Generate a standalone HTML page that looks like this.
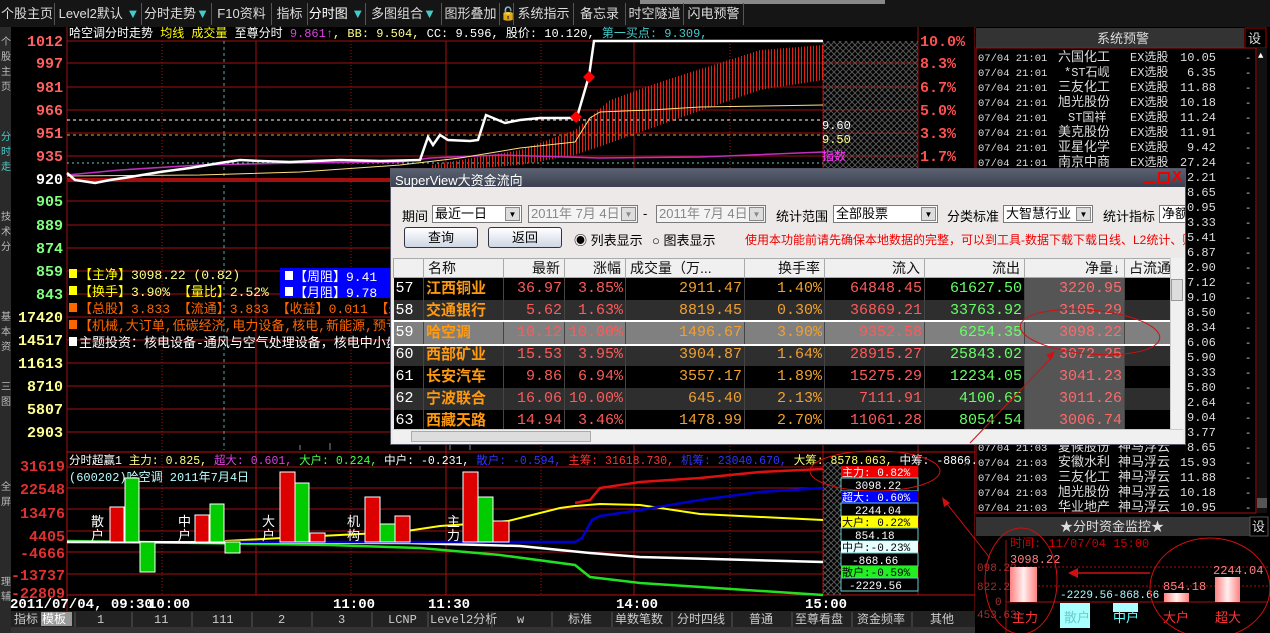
<!DOCTYPE html>
<html><head><meta charset="utf-8"><style>
*{margin:0;padding:0;box-sizing:border-box}
body{width:1270px;height:633px;background:#000;overflow:hidden;position:relative;font-family:"Liberation Sans","Noto Sans CJK SC",sans-serif}
.a{position:absolute;white-space:nowrap}
svg{position:absolute;left:0;top:0}
.tb{position:absolute;top:3px;height:22px;line-height:22px;font-size:13px;color:#ddd;border-right:1px solid #555;text-align:center}
.dlg{position:absolute;left:390px;top:168px;width:796px;height:277px;background:#ece9e8;border:1px solid #556;overflow:hidden}
.sel{position:absolute;height:18px;background:#fff;border:1px solid #7a7a7a;font-size:13px;line-height:16px;padding-left:2px;color:#000;overflow:hidden;white-space:nowrap}
.sel i{position:absolute;right:1px;top:1px;width:15px;height:14px;background:#ddd;border:1px solid #888;font-style:normal;font-size:8px;text-align:center;line-height:13px}
.dis{color:#888;background:#f4f4f4}
.btn{position:absolute;top:58px;height:21px;width:74px;border:1px solid #334;border-radius:3px;background:linear-gradient(#fff,#cfd6e4);font-size:13px;text-align:center;line-height:19px}
table{position:absolute;left:2px;top:89px;border-collapse:collapse;table-layout:fixed;width:777px;font-family:"Liberation Mono","Noto Sans CJK SC",monospace;font-size:15px}
tr{height:22px}
td{height:22px;line-height:20px;padding:0 2px;text-align:right;border-right:1px solid #444;overflow:hidden;white-space:nowrap}
th{height:19px;line-height:17px;background:#f0f0f0;color:#111;font-weight:normal;font-size:14px;border:1px solid #aaa;text-align:right;padding:0 4px;font-family:"Liberation Sans","Noto Sans CJK SC",sans-serif;overflow:hidden;white-space:nowrap}
.n{color:#ff9a10;font-weight:bold;text-align:left;font-family:"Liberation Sans","Noto Sans CJK SC",sans-serif;font-size:15px}
.i{color:#fff;text-align:left}
.r{color:#ff5a5a}.o{color:#f0a030}.g{color:#66ff66}.q{background:#555;color:#ff6a6a}
</style></head><body>
<svg width="1270" height="633" font-family="Liberation Mono, Noto Sans CJK SC, monospace">
<defs>
<pattern id="hx" width="6" height="6" patternUnits="userSpaceOnUse"><path d="M0 0L6 6M6 0L0 6" stroke="#555" stroke-width="1"/></pattern>
<pattern id="vs" width="3" height="4" patternUnits="userSpaceOnUse"><rect width="1" height="4" fill="#e02010"/></pattern>
<linearGradient id="pk" x1="0" x2="1"><stop offset="0" stop-color="#ff8080"/><stop offset=".5" stop-color="#fff0f0"/><stop offset="1" stop-color="#ff8080"/></linearGradient>
</defs>
<rect x="0" y="0" width="1270" height="27" fill="#151515"/>
<rect x="640" y="0" width="245" height="4" fill="#888"/>
<rect x="0" y="27" width="11" height="606" fill="#2a2a2a"/>
<g fill="#bbb" font-size="10"><text x="1" y="45">个</text><text x="1" y="60">股</text><text x="1" y="75">主</text><text x="1" y="90">页</text>
<text x="1" y="140" fill="#4cc">分</text><text x="1" y="155" fill="#4cc">时</text><text x="1" y="170" fill="#4cc">走</text>
<text x="1" y="220">技</text><text x="1" y="235">术</text><text x="1" y="250">分</text><text x="1" y="320">基</text><text x="1" y="335">本</text><text x="1" y="350">资</text><text x="1" y="390">三</text><text x="1" y="405">图</text><text x="1" y="490">全</text><text x="1" y="505">屏</text><text x="1" y="585">理</text><text x="1" y="600">辅</text></g>
<g stroke="#a01010" stroke-width="1">
<line x1="67" y1="41" x2="823" y2="41"/><line x1="67" y1="63" x2="918" y2="63"/><line x1="67" y1="87" x2="918" y2="87"/><line x1="67" y1="110" x2="918" y2="110"/><line x1="67" y1="133" x2="918" y2="133"/><line x1="67" y1="156" x2="918" y2="156"/>
<line x1="67" y1="201" x2="918" y2="201"/><line x1="67" y1="225" x2="918" y2="225"/><line x1="67" y1="248" x2="918" y2="248"/><line x1="67" y1="271" x2="918" y2="271"/><line x1="67" y1="294" x2="918" y2="294"/><line x1="67" y1="317" x2="918" y2="317"/><line x1="67" y1="340" x2="918" y2="340"/><line x1="67" y1="363" x2="918" y2="363"/><line x1="67" y1="386" x2="918" y2="386"/><line x1="67" y1="409" x2="918" y2="409"/><line x1="67" y1="432" x2="918" y2="432"/>
<line x1="67" y1="27" x2="67" y2="633"/><line x1="256" y1="41" x2="256" y2="595"/><line x1="446" y1="41" x2="446" y2="595"/><line x1="634" y1="41" x2="634" y2="595"/><line x1="823" y1="41" x2="823" y2="595"/><line x1="918" y1="27" x2="918" y2="595"/><line x1="975" y1="27" x2="975" y2="633"/>
</g>
<g stroke="#a01010" stroke-dasharray="1 2"><line x1="162" y1="41" x2="162" y2="595"/><line x1="351" y1="41" x2="351" y2="595"/><line x1="541" y1="41" x2="541" y2="595"/><line x1="730" y1="41" x2="730" y2="595"/></g>
<line x1="224" y1="41" x2="224" y2="450" stroke="#5aa" stroke-dasharray="3 3"/>
<rect x="823" y="41" width="95" height="140" fill="url(#hx)"/>
<line x1="67" y1="180" x2="823" y2="180" stroke="#a01010" stroke-width="4"/>
<line x1="67" y1="120" x2="823" y2="120" stroke="#fff" stroke-dasharray="3 3"/>
<line x1="67" y1="135" x2="823" y2="135" stroke="#f0a030" stroke-dasharray="3 3"/>
<line x1="67" y1="163" x2="823" y2="163" stroke="#6cc" stroke-dasharray="2 3"/>
<polygon points="430,165 520,150 575,130 610,100 660,82 760,50 823,45 823,80 760,90 660,125 610,143 575,155 520,165 430,172" fill="url(#vs)"/>
<polyline fill="none" stroke="#c030c0" stroke-width="1.5" points="67,175 120,170 200,165 300,163 400,162 430,158 500,155 600,158 700,157 823,152"/>
<polyline fill="none" stroke="#ffe080" stroke-width="1" points="67,176 200,175 300,172 400,165 460,158 520,148 575,142 590,118 600,112 650,110 700,107 823,105"/>
<polyline fill="none" stroke="#fff" stroke-width="2.5" points="67,173 75,180 95,183 110,180 130,177 160,172 190,168 220,163 240,160 260,161 290,162 340,160 380,161 420,160 428,137 433,145 440,135 448,140 470,141 478,140 486,115 505,123 520,120 540,118 575,118 577,117 582,100 589,76 594,41 823,41"/>
<path d="M576 111l6 6-6 6-6-6zM589 71l6 6-6 6-6-6z" fill="#f00"/>
<text x="822" y="129" fill="#fff" font-size="12">9.60</text><text x="822" y="143" fill="#ff8" font-size="12">9.50</text><text x="822" y="160" fill="#f3f" font-size="12">指数</text>
<g fill="#ff5050" font-size="15" font-weight="bold"><text x="920" y="46">10.0%</text><text x="920" y="68">8.3%</text><text x="920" y="92">6.7%</text><text x="920" y="115">5.0%</text><text x="920" y="138">3.3%</text><text x="920" y="161">1.7%</text></g>
<g font-size="15" font-weight="bold" text-anchor="end">
<g fill="#ff6060"><text x="63" y="46">1012</text><text x="63" y="68">997</text><text x="63" y="92">981</text><text x="63" y="115">966</text><text x="63" y="138">951</text><text x="63" y="161">935</text></g>
<text x="63" y="184" fill="#fff">920</text>
<g fill="#80ff80"><text x="63" y="206">905</text><text x="63" y="230">889</text><text x="63" y="253">874</text><text x="63" y="276">859</text><text x="63" y="299">843</text></g>
<g fill="#ffff90"><text x="63" y="322">17420</text><text x="63" y="345">14517</text><text x="63" y="368">11613</text><text x="63" y="391">8710</text><text x="63" y="414">5807</text><text x="63" y="437">2903</text></g>
</g>
<g font-size="12"><text x="69" y="37" fill="#fff">哈空调分时走势 <tspan fill="#ff0">均线 成交量</tspan> 至尊分时 <tspan fill="#e040e0">9.861↑</tspan><tspan fill="#ff8">, BB: 9.504,</tspan> CC: 9.596, 股价: 10.120, <tspan fill="#4cc">第一买点: 9.309,</tspan></text></g>
<g font-size="13">
<rect x="69" y="269" width="8" height="9" fill="#ff0"/><text x="79" y="279" fill="#ff0">【主净】<tspan fill="#ff8">3098.22 (0.82)</tspan></text>
<rect x="69" y="286" width="8" height="9" fill="#ff0"/><text x="79" y="296" fill="#ff0">【换手】<tspan fill="#ff8">3.90% </tspan>【量比】<tspan fill="#ff8">2.52%</tspan></text>
<rect x="69" y="303" width="8" height="9" fill="#f60"/><text x="79" y="313" fill="#f60">【总股】3.833 【流通】3.833 【收益】0.011 【未分】1.</text>
<rect x="69" y="320" width="8" height="9" fill="#f60"/><text x="79" y="330" fill="#f60">【机械,大订单,低碳经济,电力设备,核电,新能源,预亏预减</text>
<rect x="69" y="337" width="8" height="9" fill="#fff"/><text x="79" y="347" fill="#fff">主题投资：核电设备-通风与空气处理设备，核电中小盘</text>
<rect x="280" y="268" width="110" height="30" fill="#0000ff"/>
<rect x="285" y="271" width="8" height="9" fill="#fff"/><text x="294" y="281" fill="#fff">【周阻】9.41</text>
<rect x="285" y="287" width="8" height="9" fill="#fff"/><text x="294" y="297" fill="#fff">【月阻】9.78</text>
</g>
<g stroke="#888"><line x1="300" y1="445" x2="300" y2="450"/><line x1="330" y1="443" x2="330" y2="450"/><line x1="420" y1="446" x2="420" y2="450"/><line x1="450" y1="440" x2="450" y2="450"/><line x1="470" y1="444" x2="470" y2="450"/></g>
<rect x="67" y="452" width="908" height="143" fill="none" stroke="#c01010"/>
<g stroke="#a01010"><line x1="67" y1="467" x2="823" y2="467"/><line x1="67" y1="488" x2="823" y2="488"/><line x1="67" y1="509" x2="823" y2="509"/><line x1="67" y1="531" x2="823" y2="531"/><line x1="67" y1="552" x2="823" y2="552"/><line x1="67" y1="574" x2="823" y2="574"/></g>
<rect x="823" y="462" width="18" height="133" fill="url(#hx)"/>
<g font-size="15" font-weight="bold" fill="#e03030" text-anchor="end"><text x="65" y="471">31619</text><text x="65" y="494">22548</text><text x="65" y="518">13476</text><text x="65" y="541">4405</text><text x="65" y="558">-4666</text><text x="65" y="580">-13737</text><text x="65" y="598">-22809</text></g>
<text x="69" y="464" font-size="11.5" fill="#fff">分时超赢1 <tspan fill="#ff8">主力: 0.825,</tspan> <tspan fill="#e040e0">超大: 0.601,</tspan> <tspan fill="#4f4">大户: 0.224,</tspan> 中户: -0.231, <tspan fill="#33f">散户: -0.594,</tspan> <tspan fill="#f33">主筹: 31618.730,</tspan> <tspan fill="#33f">机筹: 23040.670,</tspan> <tspan fill="#ff6">大筹: 8578.063,</tspan> 中筹: -8866.840, <tspan fill="#4f4">散</tspan></text>
<text x="69" y="481" font-size="12" fill="#bff">(600202)哈空调 2011年7月4日</text>
<polyline fill="none" stroke="#20e020" stroke-width="2.5" points="67,541 330,545 420,548 500,555 575,565 590,577 640,583 823,595"/>
<polyline fill="none" stroke="#fff" stroke-width="2.5" points="67,542 410,543 520,546 590,553 640,557 823,562"/>
<polyline fill="none" stroke="#ff0" stroke-width="2" points="225,541 300,537 400,532 440,526 470,524 508,521 560,508 575,506 600,504 640,505 700,514 823,520"/>
<polyline fill="none" stroke="#00c" stroke-width="2.5" points="225,542 575,542 582,538 592,520 600,516 640,510 700,500 760,492 823,488"/>
<polyline fill="none" stroke="#e01010" stroke-width="2.5" points="575,503 590,500 600,488 640,482 700,478 760,472 823,469"/>
<g stroke="#fff" stroke-width="1">
<rect x="110" y="507" width="14" height="35" fill="#d00"/><rect x="125" y="478" width="14" height="64" fill="#0c0"/><rect x="140" y="542" width="15" height="30" fill="#0c0"/>
<rect x="195" y="515" width="14" height="27" fill="#d00"/><rect x="210" y="504" width="14" height="38" fill="#0c0"/><rect x="225" y="542" width="15" height="11" fill="#0c0"/>
<rect x="280" y="472" width="15" height="70" fill="#d00"/><rect x="295" y="483" width="14" height="59" fill="#0c0"/><rect x="310" y="533" width="15" height="9" fill="#d00"/>
<rect x="365" y="497" width="15" height="45" fill="#d00"/><rect x="380" y="524" width="15" height="18" fill="#0c0"/><rect x="395" y="516" width="15" height="26" fill="#d00"/>
<rect x="463" y="472" width="15" height="70" fill="#d00"/><rect x="478" y="497" width="15" height="45" fill="#0c0"/><rect x="493" y="521" width="16" height="21" fill="#d00"/>
</g>
<g font-size="13" fill="#fff"><text x="91" y="526">散</text><text x="91" y="540">户</text><text x="178" y="526">中</text><text x="178" y="540">户</text><text x="262" y="526">大</text><text x="262" y="540">户</text><text x="347" y="526">机</text><text x="347" y="540">构</text><text x="447" y="526">主</text><text x="447" y="540">力</text></g>
<g font-size="11">
<rect x="841" y="466" width="77" height="12" fill="#e00"/><text x="842" y="476" fill="#fff">主力: 0.82%</text>
<rect x="841" y="478" width="77" height="13" fill="#000" stroke="#6cc"/><text x="855" y="489" fill="#fff">3098.22</text>
<rect x="841" y="491" width="77" height="12" fill="#00f"/><text x="842" y="501" fill="#fff">超大: 0.60%</text>
<rect x="841" y="503" width="77" height="13" fill="#000" stroke="#6cc"/><text x="855" y="514" fill="#fff">2244.04</text>
<rect x="841" y="516" width="77" height="12" fill="#ff0"/><text x="842" y="526" fill="#000">大户: 0.22%</text>
<rect x="841" y="528" width="77" height="13" fill="#000" stroke="#6cc"/><text x="855" y="539" fill="#fff">854.18</text>
<rect x="841" y="541" width="77" height="12" fill="#e8ffff"/><text x="842" y="551" fill="#000">中户:-0.23%</text>
<rect x="841" y="553" width="77" height="13" fill="#000" stroke="#6cc"/><text x="852" y="564" fill="#fff">-868.66</text>
<rect x="841" y="566" width="77" height="12" fill="#2e2"/><text x="842" y="576" fill="#000">散户:-0.59%</text>
<rect x="841" y="578" width="77" height="13" fill="#000" stroke="#6cc"/><text x="849" y="589" fill="#fff">-2229.56</text>
</g>
<text x="963" y="467" fill="#666" font-size="12">×</text>
<g font-size="14" font-weight="bold" fill="#fff"><text x="10" y="608">2011/07/04, 09:30</text><text x="148" y="608">10:00</text><text x="333" y="608">11:00</text><text x="428" y="608">11:30</text><text x="616" y="608">14:00</text><text x="805" y="608">15:00</text></g>
<rect x="11" y="611" width="964" height="16" fill="#222"/>
<rect x="41" y="612" width="31" height="14" fill="#999"/>
<g font-size="12" fill="#ccc"><text x="14" y="623">指标</text><text x="42" y="623" fill="#fff">模板</text><text x="97" y="623">1</text><text x="154" y="623">11</text><text x="212" y="623">111</text><text x="278" y="623">2</text><text x="338" y="623">3</text><text x="388" y="623">LCNP</text><text x="430" y="623">Level2分析</text><text x="517" y="623">w</text><text x="568" y="623">标准</text><text x="615" y="623">单数笔数</text><text x="677" y="623">分时四线</text><text x="749" y="623">普通</text><text x="795" y="623">至尊看盘</text><text x="857" y="623">资金频率</text><text x="930" y="623">其他</text></g>
<g stroke="#555"><line x1="75" y1="612" x2="75" y2="627"/><line x1="132" y1="612" x2="132" y2="627"/><line x1="192" y1="612" x2="192" y2="627"/><line x1="252" y1="612" x2="252" y2="627"/><line x1="312" y1="612" x2="312" y2="627"/><line x1="372" y1="612" x2="372" y2="627"/><line x1="428" y1="612" x2="428" y2="627"/><line x1="492" y1="612" x2="492" y2="627"/><line x1="552" y1="612" x2="552" y2="627"/><line x1="612" y1="612" x2="612" y2="627"/><line x1="672" y1="612" x2="672" y2="627"/><line x1="732" y1="612" x2="732" y2="627"/><line x1="792" y1="612" x2="792" y2="627"/><line x1="852" y1="612" x2="852" y2="627"/><line x1="912" y1="612" x2="912" y2="627"/></g>
<rect x="11" y="627" width="964" height="6" fill="#333"/>
<rect x="975" y="28" width="295" height="605" fill="#000"/>
<rect x="976" y="28" width="268" height="20" fill="#333"/><text x="1097" y="43" fill="#ddd" font-size="13">系统预警</text>
<rect x="1245" y="28" width="21" height="20" fill="#000" stroke="#a00"/><text x="1248" y="43" fill="#ddd" font-size="13">设</text>
<rect x="976" y="48" width="280" height="465" fill="none" stroke="#a01010"/>
<rect x="1257" y="48" width="10" height="465" fill="#111"/><text x="1258" y="58" fill="#fff" font-size="9">▲</text>
<rect x="1257" y="498" width="10" height="10" fill="#555"/>
<g font-size="10.5" fill="#ddd">
<text x="978" y="61">07/04 21:01<tspan x="1058" font-size="13">六国化工</tspan><tspan x="1130" font-size="12">EX选股</tspan><tspan x="1180" font-size="12">10.05</tspan><tspan x="1245">-</tspan></text>
<text x="978" y="76">07/04 21:01<tspan x="1064" font-size="12">*ST石岘</tspan><tspan x="1130" font-size="12">EX选股</tspan><tspan x="1187" font-size="12">6.35</tspan><tspan x="1245">-</tspan></text>
<text x="978" y="91">07/04 21:01<tspan x="1058" font-size="13">三友化工</tspan><tspan x="1130" font-size="12">EX选股</tspan><tspan x="1180" font-size="12">11.88</tspan><tspan x="1245">-</tspan></text>
<text x="978" y="106">07/04 21:01<tspan x="1058" font-size="13">旭光股份</tspan><tspan x="1130" font-size="12">EX选股</tspan><tspan x="1180" font-size="12">10.18</tspan><tspan x="1245">-</tspan></text>
<text x="978" y="121">07/04 21:01<tspan x="1068" font-size="12">ST国祥</tspan><tspan x="1130" font-size="12">EX选股</tspan><tspan x="1180" font-size="12">11.24</tspan><tspan x="1245">-</tspan></text>
<text x="978" y="136">07/04 21:01<tspan x="1058" font-size="13">美克股份</tspan><tspan x="1130" font-size="12">EX选股</tspan><tspan x="1180" font-size="12">11.91</tspan><tspan x="1245">-</tspan></text>
<text x="978" y="151">07/04 21:01<tspan x="1058" font-size="13">亚星化学</tspan><tspan x="1130" font-size="12">EX选股</tspan><tspan x="1187" font-size="12">9.42</tspan><tspan x="1245">-</tspan></text>
<text x="978" y="166">07/04 21:01<tspan x="1058" font-size="13">南京中商</tspan><tspan x="1130" font-size="12">EX选股</tspan><tspan x="1180" font-size="12">27.24</tspan><tspan x="1245">-</tspan></text>
<g font-size="12"><text x="1187" y="181">2.21</text><text x="1187" y="196">8.65</text><text x="1187" y="211">0.95</text><text x="1187" y="226">3.33</text><text x="1187" y="241">5.41</text><text x="1187" y="256">6.87</text><text x="1187" y="271">2.90</text><text x="1187" y="286">7.12</text><text x="1187" y="301">9.10</text><text x="1187" y="316">8.50</text><text x="1187" y="331">8.34</text><text x="1187" y="346">6.06</text><text x="1187" y="361">5.90</text><text x="1187" y="376">3.33</text><text x="1187" y="391">5.80</text><text x="1187" y="406">2.64</text><text x="1187" y="421">9.04</text><text x="1187" y="436">3.77</text></g>
<g><text x="1245" y="181">-</text><text x="1245" y="196">-</text><text x="1245" y="211">-</text><text x="1245" y="226">-</text><text x="1245" y="241">-</text><text x="1245" y="256">-</text><text x="1245" y="271">-</text><text x="1245" y="286">-</text><text x="1245" y="301">-</text><text x="1245" y="316">-</text><text x="1245" y="331">-</text><text x="1245" y="346">-</text><text x="1245" y="361">-</text><text x="1245" y="376">-</text><text x="1245" y="391">-</text><text x="1245" y="406">-</text><text x="1245" y="421">-</text><text x="1245" y="436">-</text></g>
<text x="978" y="451">07/04 21:03<tspan x="1058" font-size="13">夏候股份</tspan><tspan x="1118" font-size="13">神马浮云</tspan><tspan x="1187" font-size="12">8.65</tspan><tspan x="1245">-</tspan></text>
<text x="978" y="466">07/04 21:03<tspan x="1058" font-size="13">安徽水利</tspan><tspan x="1118" font-size="13">神马浮云</tspan><tspan x="1180" font-size="12">15.93</tspan><tspan x="1245">-</tspan></text>
<text x="978" y="481">07/04 21:03<tspan x="1058" font-size="13">三友化工</tspan><tspan x="1118" font-size="13">神马浮云</tspan><tspan x="1180" font-size="12">11.88</tspan><tspan x="1245">-</tspan></text>
<text x="978" y="496">07/04 21:03<tspan x="1058" font-size="13">旭光股份</tspan><tspan x="1118" font-size="13">神马浮云</tspan><tspan x="1180" font-size="12">10.18</tspan><tspan x="1245">-</tspan></text>
<text x="978" y="511">07/04 21:03<tspan x="1058" font-size="13">华业地产</tspan><tspan x="1118" font-size="13">神马浮云</tspan><tspan x="1180" font-size="12">10.95</tspan><tspan x="1245">-</tspan></text>
</g>
<rect x="976" y="517" width="274" height="19" fill="#333"/><text x="1060" y="531" fill="#ddd" font-size="13">★分时资金监控★</text>
<rect x="1250" y="517" width="18" height="19" fill="#000" stroke="#555"/><text x="1252" y="531" fill="#ddd" font-size="13">设</text>
<g stroke="#a01010"><line x1="1006" y1="567" x2="1268" y2="567" stroke-dasharray="2 2"/><line x1="1006" y1="586" x2="1268" y2="586" stroke-dasharray="2 2"/><line x1="1006" y1="602" x2="1268" y2="602"/><line x1="1006" y1="540" x2="1006" y2="633"/></g>
<g font-size="11" fill="#a03030"><text x="977" y="571">098.22</text><text x="977" y="590">822.29</text><text x="995" y="605">0</text><text x="977" y="618">453.63</text></g>
<text x="1010" y="547" fill="#c00" font-size="12">时间: 11/07/04 15:00</text>
<rect x="1010" y="567" width="27" height="35" fill="url(#pk)"/>
<rect x="1060" y="603" width="30" height="25" fill="#aff"/>
<rect x="1113" y="603" width="25" height="9" fill="#aff"/>
<rect x="1164" y="593" width="25" height="9" fill="url(#pk)"/>
<rect x="1215" y="577" width="25" height="25" fill="url(#pk)"/>
<g font-size="12"><text x="1010" y="563" fill="#ff8080">3098.22</text><text x="1060" y="598" fill="#aff" font-size="11">-2229.56</text><text x="1113" y="598" fill="#aff" font-size="11">-868.66</text><text x="1163" y="590" fill="#ff8080">854.18</text><text x="1213" y="574" fill="#ff8080">2244.04</text>
<text x="1012" y="622" fill="#f33" font-size="13">主力</text><text x="1064" y="622" fill="#6cc" font-size="13">散户</text><text x="1113" y="622" fill="#6ff" font-size="13">中户</text><text x="1163" y="622" fill="#f33" font-size="13">大户</text><text x="1215" y="622" fill="#f33" font-size="13">超大</text></g>
</svg>
<div class="dlg">
<div class="a" style="left:0;top:0;width:794px;height:18px;background:linear-gradient(#5a6170,#3a4050)"></div>
<div class="a" style="left:4px;top:1px;color:#fff;font-size:13px">SuperView大资金流向</div>
<div class="a" style="left:752px;top:12px;width:12px;height:3px;background:#e00"></div>
<div class="a" style="left:767px;top:3px;width:12px;height:12px;border:2px solid #e00"></div>
<div class="a" style="left:781px;top:-1px;color:#e00;font-size:15px;font-weight:bold">X</div>
<div class="a" style="left:11px;top:37px;font-size:13px">期间</div>
<div class="sel" style="left:41px;top:36px;width:90px">最近一日<i>▼</i></div>
<div class="sel dis" style="left:137px;top:36px;width:110px">2011年 7月 4日<i>▼</i></div>
<div class="a" style="left:252px;top:37px;font-size:13px">-</div>
<div class="sel dis" style="left:265px;top:36px;width:110px">2011年 7月 4日<i>▼</i></div>
<div class="a" style="left:385px;top:37px;font-size:13px">统计范围</div>
<div class="sel" style="left:442px;top:36px;width:105px">全部股票<i>▼</i></div>
<div class="a" style="left:556px;top:37px;font-size:13px">分类标准</div>
<div class="sel" style="left:612px;top:36px;width:90px">大智慧行业<i>▼</i></div>
<div class="a" style="left:712px;top:37px;font-size:13px">统计指标</div>
<div class="sel" style="left:768px;top:36px;width:28px">净额</div>
<div class="btn" style="left:13px">查询</div><div class="btn" style="left:97px">返回</div>
<div class="a" style="left:183px;top:61px;font-size:13px">◉ 列表显示</div>
<div class="a" style="left:261px;top:61px;font-size:13px">○ 图表显示</div>
<div class="a" style="left:354px;top:62px;font-size:12px;color:#e00;width:440px;overflow:hidden">使用本功能前请先确保本地数据的完整，可以到工具-数据下载下载日线、L2统计、财</div>
<table>
<colgroup><col style="width:30px"><col style="width:80px"><col style="width:61px"><col style="width:61px"><col style="width:119px"><col style="width:80px"><col style="width:100px"><col style="width:100px"><col style="width:100px"><col style="width:46px"></colgroup>
<tr style="height:19px"><th></th><th style="text-align:left">名称</th><th>最新</th><th>涨幅</th><th style="text-align:left">成交量（万...</th><th>换手率</th><th>流入</th><th>流出</th><th>净量↓</th><th style="text-align:left">占流通</th></tr>
<tr style="background:#000"><td class="i">57</td><td class="n">江西铜业</td><td class="r">36.97</td><td class="r">3.85%</td><td class="o">2911.47</td><td class="o">1.40%</td><td class="r">64848.45</td><td class="g">61627.50</td><td class="q">3220.95</td><td></td></tr>
<tr style="background:#2e2e2e"><td class="i">58</td><td class="n">交通银行</td><td class="r">5.62</td><td class="r">1.63%</td><td class="o">8819.45</td><td class="o">0.30%</td><td class="r">36869.21</td><td class="g">33763.92</td><td class="q">3105.29</td><td></td></tr>
<tr style="background:#808080;outline:2px solid #fff"><td class="i">59</td><td class="n">哈空调</td><td class="r">10.12</td><td class="r">10.00%</td><td class="o">1496.67</td><td class="o">3.90%</td><td class="r">9352.58</td><td class="g">6254.35</td><td class="q" style="background:#777">3098.22</td><td></td></tr>
<tr style="background:#2e2e2e"><td class="i">60</td><td class="n">西部矿业</td><td class="r">15.53</td><td class="r">3.95%</td><td class="o">3904.87</td><td class="o">1.64%</td><td class="r">28915.27</td><td class="g">25843.02</td><td class="q">3072.25</td><td></td></tr>
<tr style="background:#000"><td class="i">61</td><td class="n">长安汽车</td><td class="r">9.86</td><td class="r">6.94%</td><td class="o">3557.17</td><td class="o">1.89%</td><td class="r">15275.29</td><td class="g">12234.05</td><td class="q">3041.23</td><td></td></tr>
<tr style="background:#2e2e2e"><td class="i">62</td><td class="n">宁波联合</td><td class="r">16.06</td><td class="r">10.00%</td><td class="o">645.40</td><td class="o">2.13%</td><td class="r">7111.91</td><td class="g">4100.65</td><td class="q">3011.26</td><td></td></tr>
<tr style="background:#000"><td class="i">63</td><td class="n">西藏天路</td><td class="r">14.94</td><td class="r">3.46%</td><td class="o">1478.99</td><td class="o">2.70%</td><td class="r">11061.28</td><td class="g">8054.54</td><td class="q">3006.74</td><td></td></tr>
</table>
<div class="a" style="left:779px;top:89px;width:14px;height:171px;background:#f0f0f0;border-left:1px solid #ccc"></div>
<div class="a" style="left:780px;top:110px;width:12px;height:22px;background:#ddd;border:1px solid #999"></div>
<div class="a" style="left:2px;top:260px;width:790px;height:15px;background:#f0f0f0;border-top:1px solid #ccc"></div>
<div class="a" style="left:20px;top:262px;width:180px;height:11px;background:#ddd;border:1px solid #aaa"></div>
</div>
<svg width="1270" height="633" style="pointer-events:none">
<g fill="none" stroke="#d01010" stroke-width="1">
<ellipse cx="1090" cy="332" rx="70" ry="22" transform="rotate(5 1090 332)"/>
<line x1="970" y1="443" x2="1053" y2="356"/>
<line x1="944" y1="500" x2="990" y2="558"/>
<ellipse cx="875" cy="471" rx="65" ry="20"/>
<ellipse cx="1021" cy="581" rx="36" ry="53"/>
<ellipse cx="1210" cy="588" rx="60" ry="50"/>
<line x1="1150" y1="573" x2="1075" y2="573" stroke-width="1.5"/>
</g>
<path d="M1055 351l-9 4 5 5z" fill="#d01010"/>
<path d="M942 497l2 10 6-4z" fill="#d01010"/>
<path d="M1068 573l10-5v10z" fill="#d01010"/>
</svg>
<div class="tb" style="left:0;width:55px">个股主页</div>
<div class="tb" style="left:57px;width:85px">Level2默认 <span style="color:#4cc">▼</span></div>
<div class="tb" style="left:142px;width:70px">分时走势<span style="color:#4cc">▼</span></div>
<div class="tb" style="left:212px;width:60px">F10资料</div>
<div class="tb" style="left:272px;width:36px">指标</div>
<div class="tb" style="left:308px;width:58px;color:#fff">分时图 <span style="color:#4cc">▼</span></div>
<div class="tb" style="left:366px;width:76px">多图组合<span style="color:#4cc">▼</span></div>
<div class="tb" style="left:442px;width:58px">图形叠加</div>
<div class="tb" style="left:500px;width:14px">🔓</div>
<div class="tb" style="left:514px;width:60px">系统指示</div>
<div class="tb" style="left:574px;width:52px">备忘录</div>
<div class="tb" style="left:626px;width:58px">时空隧道</div>
<div class="tb" style="left:684px;width:60px">闪电预警</div>
</body></html>
